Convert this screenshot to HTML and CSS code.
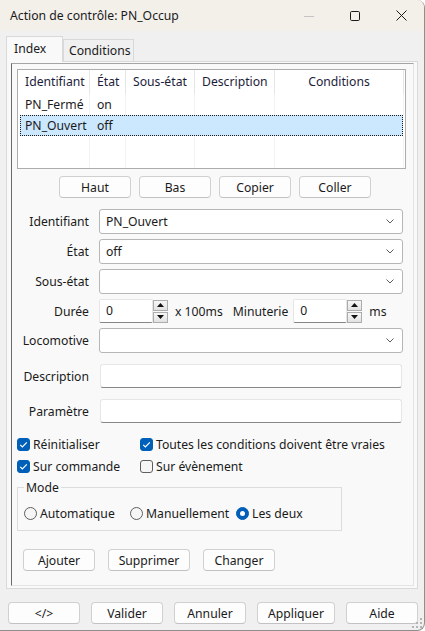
FILE: index.html
```html
<!DOCTYPE html>
<html lang="fr">
<head>
<meta charset="utf-8">
<title>Action de contrôle: PN_Occup</title>
<link rel="stylesheet" href="styles.css">
</head>
<body>
<div class="window">
  <div class="titlebar">
    <span class="title">Action de contrôle: PN_Occup</span>
    <div class="caption-buttons">
      <span class="cap"><svg width="10" height="10" viewBox="0 0 10 10"><path d="M0 5.5H10" stroke="#c4c4c4" stroke-width="1"/></svg></span>
      <span class="cap"><svg width="10" height="10" viewBox="0 0 10 10"><rect x="0.5" y="0.5" width="9" height="9" rx="1.2" fill="none" stroke="#1a1a1a"/></svg></span>
      <span class="cap"><svg width="11" height="11" viewBox="0 0 11 11"><path d="M0.5 0.5L10.5 10.5M10.5 0.5L0.5 10.5" stroke="#1a1a1a"/></svg></span>
    </div>
  </div>
  <div class="client">
    <div class="tabs">
      <div class="tab active">Index</div>
      <div class="tab">Conditions</div>
    </div>
    <div class="tabpanel">
      <div class="page">
        <div class="listview">
          <div class="lv-row lv-head">
            <div class="lv-cell">Identifiant</div>
            <div class="lv-cell">État</div>
            <div class="lv-cell">Sous-état</div>
            <div class="lv-cell">Description</div>
            <div class="lv-cell center">Conditions</div>
          </div>
          <div class="lv-row">
            <div class="lv-cell">PN_Fermé</div>
            <div class="lv-cell">on</div>
            <div class="lv-cell"></div>
            <div class="lv-cell"></div>
            <div class="lv-cell"></div>
          </div>
          <div class="lv-row selected">
            <div class="lv-cell">PN_Ouvert</div>
            <div class="lv-cell">off</div>
            <div class="lv-cell"></div>
            <div class="lv-cell"></div>
            <div class="lv-cell"></div>
          </div>
          <div class="lv-row filler">
            <div class="lv-cell"></div>
            <div class="lv-cell"></div>
            <div class="lv-cell"></div>
            <div class="lv-cell"></div>
            <div class="lv-cell"></div>
          </div>
        </div>

        <div class="order-buttons">
          <button class="btn">Haut</button>
          <button class="btn">Bas</button>
          <button class="btn">Copier</button>
          <button class="btn">Coller</button>
        </div>

        <div class="form">
          <label class="lbl">Identifiant</label>
          <div class="combo"><span class="combo-text">PN_Ouvert</span><svg class="chev" width="8" height="5" viewBox="0 0 8 5"><path d="M0.5 0.5L4 4L7.5 0.5" fill="none" stroke="#5c5c5c"/></svg></div>

          <label class="lbl">État</label>
          <div class="combo"><span class="combo-text">off</span><svg class="chev" width="8" height="5" viewBox="0 0 8 5"><path d="M0.5 0.5L4 4L7.5 0.5" fill="none" stroke="#5c5c5c"/></svg></div>

          <label class="lbl">Sous-état</label>
          <div class="combo"><span class="combo-text"></span><svg class="chev" width="8" height="5" viewBox="0 0 8 5"><path d="M0.5 0.5L4 4L7.5 0.5" fill="none" stroke="#5c5c5c"/></svg></div>

          <label class="lbl">Durée</label>
          <div class="spin-row">
            <div class="spin-field">0</div>
            <div class="spin-btns">
              <span class="spin-btn"><svg width="7" height="4" viewBox="0 0 7 4"><path d="M0 4L3.5 0L7 4Z" fill="#111"/></svg></span>
              <span class="spin-btn"><svg width="7" height="4" viewBox="0 0 7 4"><path d="M0 0L3.5 4L7 0Z" fill="#111"/></svg></span>
            </div>
            <span class="unit">x 100ms</span>
            <span class="inline-lbl">Minuterie</span>
            <div class="spin-field">0</div>
            <div class="spin-btns">
              <span class="spin-btn"><svg width="7" height="4" viewBox="0 0 7 4"><path d="M0 4L3.5 0L7 4Z" fill="#111"/></svg></span>
              <span class="spin-btn"><svg width="7" height="4" viewBox="0 0 7 4"><path d="M0 0L3.5 4L7 0Z" fill="#111"/></svg></span>
            </div>
            <span class="unit">ms</span>
          </div>

          <label class="lbl">Locomotive</label>
          <div class="combo"><span class="combo-text"></span><svg class="chev" width="8" height="5" viewBox="0 0 8 5"><path d="M0.5 0.5L4 4L7.5 0.5" fill="none" stroke="#5c5c5c"/></svg></div>

          <label class="lbl spaced">Description</label>
          <div class="edit spaced"></div>

          <label class="lbl spaced">Paramètre</label>
          <div class="edit spaced"></div>
        </div>

        <div class="checks">
          <div class="check"><span class="box on"><svg width="13" height="13" viewBox="0 0 13 13"><path d="M3.2 6.8L5.4 9L9.8 4.4" fill="none" stroke="#fff" stroke-width="1.2"/></svg></span>Réinitialiser</div>
          <div class="check"><span class="box on"><svg width="13" height="13" viewBox="0 0 13 13"><path d="M3.2 6.8L5.4 9L9.8 4.4" fill="none" stroke="#fff" stroke-width="1.2"/></svg></span>Toutes les conditions doivent être vraies</div>
          <div class="check"><span class="box on"><svg width="13" height="13" viewBox="0 0 13 13"><path d="M3.2 6.8L5.4 9L9.8 4.4" fill="none" stroke="#fff" stroke-width="1.2"/></svg></span>Sur commande</div>
          <div class="check"><span class="box"></span>Sur évènement</div>
        </div>

        <fieldset class="group">
          <legend>Mode</legend>
          <div class="radios">
            <div class="radio"><span class="dot"></span>Automatique</div>
            <div class="radio"><span class="dot"></span>Manuellement</div>
            <div class="radio"><span class="dot on"></span>Les deux</div>
          </div>
        </fieldset>

        <div class="edit-buttons">
          <button class="btn">Ajouter</button>
          <button class="btn wide">Supprimer</button>
          <button class="btn">Changer</button>
        </div>
      </div>
    </div>

    <div class="dialog-buttons">
      <button class="btn">&lt;/&gt;</button>
      <button class="btn">Valider</button>
      <button class="btn">Annuler</button>
      <button class="btn apply">Appliquer</button>
      <button class="btn">Aide</button>
    </div>
  </div>
  <svg class="grip" width="12" height="12" viewBox="0 0 12 12"><g fill="#b4b4b4"><rect x="9" y="1" width="2" height="2"/><rect x="5" y="5" width="2" height="2"/><rect x="9" y="5" width="2" height="2"/><rect x="1" y="9" width="2" height="2"/><rect x="5" y="9" width="2" height="2"/><rect x="9" y="9" width="2" height="2"/></g></svg>
</div>
</body>
</html>
```

FILE: styles.css
```css
* { box-sizing: border-box; }

html, body {
  margin: 0;
  padding: 0;
  background: #ffffff;
}

body {
  font-family: "Noto Sans", "Open Sans", sans-serif;
  font-size: 12.2px;
  color: #1a1a1a;
  line-height: 17px;
}

.window {
  position: relative;
  width: 425px;
  height: 631px;
  background: #f0f0f0;
  border-right: 1px solid #8e8e8e;
  border-bottom: 1px solid #8e8e8e;
  border-radius: 0 8px 8px 0;
  overflow: hidden;
  display: flex;
  flex-direction: column;
}

/* Title bar */
.titlebar {
  height: 31px;
  flex: none;
  background: #f3f0ea;
  display: flex;
  align-items: center;
  padding-left: 10px;
}

.title {
  font-size: 12.2px;
  color: #1a1a1a;
}

.caption-buttons {
  margin-left: auto;
  display: flex;
}

.cap {
  width: 46px;
  height: 31px;
  display: flex;
  align-items: center;
  justify-content: center;
}

/* Client */
.client {
  flex: 1;
  padding-top: 5px;
}

.tabs {
  display: flex;
  align-items: flex-end;
  height: 25px;
  padding-left: 6px;
}

.tab {
  border: 1px solid #d9d9d9;
  border-bottom: none;
  background: #f0f0f0;
  height: 22px;
  line-height: 22px;
  padding-left: 5px;
  width: 71px;
}

.tab.active {
  position: relative;
  z-index: 1;
  height: 26px;
  margin-bottom: -1px;
  background: #f9f9f9;
  width: 57px;
  padding-left: 7px;
  line-height: 24px;
}

.tabpanel {
  margin-left: 6px;
  width: 412px;
  height: 528px;
  border: 1px solid #d9d9d9;
  background: #f9f9f9;
  padding: 1px 3px 2px 4px;
}

.page {
  height: 100%;
  border-left: 1px solid #6a6a6a;
  border-top: 1px solid #a4a4a4;
  border-right: 1px solid #e4e4e4;
  border-bottom: 1px solid #e4e4e4;
  padding: 5px 0 0 5px;
  display: flex;
  flex-direction: column;
}

/* List view */
.listview {
  width: 389px;
  height: 100px;
  border: 1px solid #adadad;
  background: #ffffff;
  display: flex;
  flex-direction: column;
  flex: none;
}

.lv-row {
  display: grid;
  grid-template-columns: 72px 36px 69px 80px 129px;
  height: 21px;
  flex: none;
}

.lv-head {
  height: 24px;
  color: #1c1c3a;
}

.lv-head .lv-cell {
  border-right-color: #e6e6e6;
  line-height: 24px;
}

.lv-cell {
  border-right: 1px solid #f0f2f5;
  padding-left: 7px;
  white-space: nowrap;
  overflow: hidden;
  line-height: 21px;
}

.lv-cell.center {
  padding-left: 0;
  text-align: center;
}

.lv-row.selected {
  margin-left: 2px;
  width: 383px;
  grid-template-columns: 70px 36px 69px 80px 128px;
  background: #cce8ff;
  outline: 1px dotted #1a1a1a;
  outline-offset: -1px;
}

.lv-row.selected .lv-cell {
  border-right-color: transparent;
}

.lv-row.selected .lv-cell:first-child {
  padding-left: 5px;
}

.lv-row.filler {
  flex: 1;
  height: auto;
}

/* Buttons */
.btn {
  font-family: inherit;
  font-size: 12.2px;
  color: #1a1a1a;
  height: 22px;
  width: 72px;
  padding: 0;
  margin: 0;
  background: #fdfdfd;
  border: 1px solid #d0d0d0;
  border-bottom-color: #c2c2c2;
  border-radius: 4px;
  line-height: 19px;
}

.btn.wide { width: 82px; }
.btn.apply { width: 78px; }

.order-buttons {
  margin-top: 7px;
  display: flex;
  justify-content: center;
  gap: 8px;
  width: 396px;
}

/* Form */
.form {
  margin-top: 11px;
  display: grid;
  grid-template-columns: 77px 304px;
  column-gap: 10px;
  row-gap: 5px;
  align-items: center;
  margin-left: -5px;
}

.lbl {
  text-align: right;
  white-space: nowrap;
}

.spaced {
  margin-top: 6px;
}

.combo {
  height: 25px;
  background: #ffffff;
  border: 1px solid #b6b6b6;
  border-radius: 3px;
  display: flex;
  align-items: center;
  padding: 0 8px 0 6px;
}

.combo-text { flex: 1; }

.edit {
  height: 24px;
  background: #ffffff;
  border: 1px solid #e6e6e6;
  border-bottom-color: #878787;
  border-radius: 3px;
  margin-left: 1px;
  margin-right: 1px;
}

.spin-row {
  display: flex;
  align-items: center;
  height: 24px;
}

.spin-field {
  width: 54px;
  height: 24px;
  background: #ffffff;
  border: 1px solid #e6e6e6;
  border-bottom-color: #878787;
  border-radius: 2px;
  padding-left: 6px;
  line-height: 22px;
}

.spin-btns {
  display: flex;
  flex-direction: column;
  gap: 1px;
  width: 15px;
}

.spin-btn {
  height: 11px;
  background: linear-gradient(#f7f7f7, #e2e2e2);
  border: 1px solid #acacac;
  display: flex;
  align-items: center;
  justify-content: center;
}

.unit {
  margin-left: 7px;
}

.inline-lbl {
  margin-left: 10px;
  margin-right: 5px;
}

/* Checkboxes */
.checks {
  margin-top: 10px;
  display: grid;
  grid-template-columns: 123px auto;
  grid-auto-rows: 22px;
  align-items: center;
}

.check {
  display: flex;
  align-items: center;
  white-space: nowrap;
}

.box {
  width: 13px;
  height: 13px;
  border-radius: 3px;
  border: 1px solid #5e5e5e;
  background: #f6f6f6;
  margin-right: 3px;
  display: flex;
  flex: none;
}

.box.on {
  border-color: #005fb8;
  background: #005fb8;
}

.box svg { margin: -1px; }

/* Group box */
.group {
  margin: 2px 0 0 0;
  width: 325px;
  border: 1px solid #dcdcdc;
  padding: 8px 6px 8px 6px;
}

.group legend {
  padding: 0 2px;
}

.radios {
  display: flex;
  height: 18px;
  align-items: center;
}

.radio {
  width: 106px;
  display: flex;
  align-items: center;
  white-space: nowrap;
}

.radio:last-child { width: auto; }

.dot {
  width: 13px;
  height: 13px;
  border-radius: 50%;
  border: 1px solid #5e5e5e;
  background: #f6f6f6;
  margin-right: 3px;
  flex: none;
  display: flex;
  align-items: center;
  justify-content: center;
}

.dot.on {
  border-color: #005fb8;
  background: #005fb8;
}

.dot.on::after {
  content: "";
  width: 5px;
  height: 5px;
  border-radius: 50%;
  background: #ffffff;
}

.edit-buttons {
  margin-top: 18px;
  margin-left: 6px;
  display: flex;
  gap: 13px;
}

/* Dialog buttons */
.dialog-buttons {
  margin-top: 13px;
  padding-left: 8px;
  display: flex;
  gap: 11px;
}

.grip {
  position: absolute;
  right: 1px;
  bottom: 1px;
}
```
